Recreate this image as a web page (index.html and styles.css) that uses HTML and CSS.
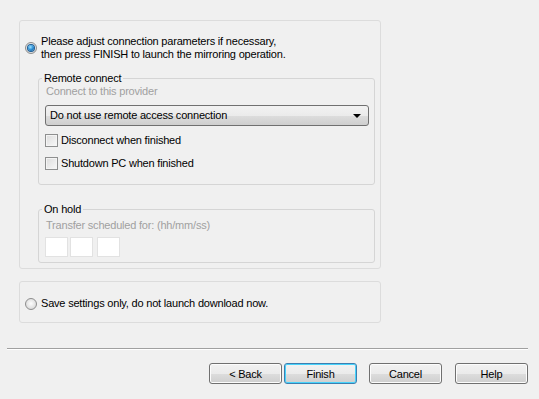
FILE: index.html
```html
<!DOCTYPE html>
<html lang="en">
<head>
  <meta charset="UTF-8">
  <title>Mirroring options</title>
  <link rel="stylesheet" href="styles.css">
</head>
<body>
  <div class="wizard">
    <div class="options">
      <section class="panel panel-main">
        <label class="choice">
          <span class="radio checked"></span>
          <span class="choice-text">Please adjust connection parameters if necessary,<br>then press FINISH to launch the mirroring operation.</span>
        </label>

        <fieldset class="group group-remote">
          <legend>Remote connect</legend>
          <div class="hint">Connect to this provider</div>
          <div class="combo">
            <span>Do not use remote access connection</span>
            <span class="combo-arrow"></span>
          </div>
          <label class="check"><span class="box"></span>Disconnect when finished</label>
          <label class="check"><span class="box"></span>Shutdown PC when finished</label>
        </fieldset>

        <fieldset class="group group-hold">
          <legend>On hold</legend>
          <div class="hint">Transfer scheduled for: (hh/mm/ss)</div>
          <div class="time">
            <span class="time-box"></span>
            <span class="time-box"></span>
            <span class="time-box"></span>
          </div>
        </fieldset>
      </section>

      <section class="panel panel-save">
        <label class="choice">
          <span class="radio"></span>
          <span class="choice-text">Save settings only, do not launch download now.</span>
        </label>
      </section>
    </div>

    <hr class="separator">

    <div class="buttons">
      <button class="btn">&lt; Back</button>
      <button class="btn btn-default">Finish</button>
      <button class="btn btn-cancel">Cancel</button>
      <button class="btn btn-help">Help</button>
    </div>
  </div>
</body>
</html>
```

FILE: styles.css
```css
:root {
  --bg: #f0f0f0;
  --text: #000;
  --disabled: #a0a0a0;
  --frame: #d5d5d5;
}

* {
  margin: 0;
  padding: 0;
  box-sizing: border-box;
}

body {
  background: var(--bg);
  color: var(--text);
  font-family: 'Liberation Sans', Arial, sans-serif;
  font-size: 11px;
  line-height: 13px;
  letter-spacing: -0.2px;
}

.options {
  padding: 20px 0 0 19px;
}

/* Panels */
.panel {
  width: 362px;
  border: 1px solid #dcdcdc;
  border-radius: 3px;
}

.panel-main {
  height: 249px;
  padding: 14px 0 0 5px;
}

.panel-save {
  height: 42px;
  margin-top: 12px;
  padding: 3px 0 0 5px;
  display: flex;
  align-items: center;
}

.choice {
  display: flex;
  align-items: center;
  gap: 4px;
}

/* Radio buttons */
.radio {
  width: 12px;
  height: 12px;
  border-radius: 50%;
  border: 1px solid #8d8d8d;
  background: radial-gradient(circle at 50% 45%, #fdfdfd 0%, #e4e4e4 55%, #cfcfcf 100%);
  display: flex;
  align-items: center;
  justify-content: center;
  flex-shrink: 0;
}

.radio.checked::after {
  content: "";
  width: 6px;
  height: 6px;
  border-radius: 50%;
  background: radial-gradient(circle at 40% 35%, #9fe3ff 0%, #2b8fd6 50%, #0e4f8c 100%);
  box-shadow: 0 0 0 1px #1b5c94;
}

/* Group boxes */
.group {
  width: 337px;
  margin-left: 13px;
  border: 1px solid var(--frame);
  border-radius: 3px;
  padding: 0 5px 14px 6px;
}

.group-remote {
  margin-top: 11px;
}

.group-hold {
  margin-top: 18px;
  padding-bottom: 5px;
}

.group legend {
  padding: 0 2px;
  margin-left: -3px;
}

.hint {
  color: var(--disabled);
  padding-left: 1px;
}

.group-hold .hint {
  margin-top: 3px;
}

/* Combo box */
.combo {
  margin-top: 7px;
  height: 21px;
  border: 1px solid #707070;
  border-radius: 3px;
  background: linear-gradient(#f2f2f2, #ebebeb 50%, #dddddd 51%, #cfcfcf);
  display: flex;
  align-items: center;
  justify-content: space-between;
  padding: 0 7px 0 4px;
}

.combo-arrow {
  width: 0;
  height: 0;
  border-left: 4px solid transparent;
  border-right: 4px solid transparent;
  border-top: 4px solid #000;
}

/* Check boxes */
.check {
  display: flex;
  align-items: center;
  gap: 3px;
  height: 13px;
  margin-top: 8px;
}

.check + .check {
  margin-top: 10px;
}

.box {
  width: 13px;
  height: 13px;
  border: 1px solid #8e8f8f;
  background: linear-gradient(135deg, #dcdcdc, #f8f8f8);
  box-shadow: inset 0 0 0 1px #f4f4f4;
}

/* Time fields */
.time {
  display: flex;
  gap: 2px;
  margin-top: 5px;
}

.time-box {
  width: 23px;
  height: 20px;
  background: #fff;
  border: 1px solid #e2e2e2;
}

.time-box:last-child {
  margin-left: 2px;
}

/* Separator + buttons */
.separator {
  margin: 25px 0 0 7px;
  width: 521px;
  height: 2px;
  border: none;
  border-top: 1px solid #a0a0a0;
  border-bottom: 1px solid #fff;
}

.buttons {
  display: flex;
  margin: 13px 0 0 209px;
}

.btn {
  width: 73px;
  height: 21px;
  border: 1px solid #707070;
  border-radius: 3px;
  background: linear-gradient(#f2f2f2, #ebebeb 50%, #dddddd 51%, #cfcfcf);
  box-shadow: inset 0 0 0 1px #fcfcfc;
  font-family: inherit;
  font-size: 11px;
  letter-spacing: inherit;
  color: #000;
}

.btn-default {
  margin-left: 2px;
  border-color: #3c7fb1;
  box-shadow: inset 0 0 0 1px #48d3fb;
}

.btn-cancel {
  margin-left: 12px;
}

.btn-help {
  margin-left: 13px;
}
```
